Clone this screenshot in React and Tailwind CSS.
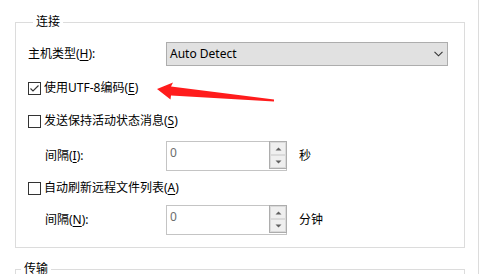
import React from "react";

const U = ({ children }) => <span className="underline underline-offset-[2px] decoration-[1px]">{children}</span>;

function Checkbox({ checked }) {
  return (
    <div className="w-[13px] h-[13px] border border-[#333333] bg-white flex items-center justify-center shrink-0">
      {checked && (
        <svg width="11" height="11" viewBox="0 0 11 11">
          <path d="M1.5 5.5 L4 8 L9.5 2.5" fill="none" stroke="#333333" strokeWidth="1.1" />
        </svg>
      )}
    </div>
  );
}

function Spin({ unit }) {
  return (
    <div className="flex items-start">
      <div className="w-[121px] h-[30px] flex border border-[#c4c4c4] bg-white">
        <div className="flex-1 pl-[3px] pt-[3px] leading-[16px] text-[#6d6d6d]">0</div>
        <div className="w-[18px] h-full flex flex-col border-l border-[#adadad] -my-px -mr-px border-t border-b border-r">
          <div className="flex-1 bg-[#efefef] border border-[#dadada] flex items-center justify-center">
            <svg width="7" height="4" viewBox="0 0 7 4"><path d="M0.5 3.5 L3.5 0.5 L6.5 3.5 Z" fill="#606060" /></svg>
          </div>
          <div className="flex-1 bg-[#efefef] border border-[#dadada] flex items-center justify-center">
            <svg width="7" height="4" viewBox="0 0 7 4"><path d="M0.5 0.5 L3.5 3.5 L6.5 0.5 Z" fill="#606060" /></svg>
          </div>
        </div>
      </div>
      <div className="ml-[12px] leading-[16px] mt-[7px]">{unit}</div>
    </div>
  );
}

export default function App() {
  return (
    <div className="relative w-[481px] h-[274px] overflow-hidden bg-white text-[12px] text-black font-['Noto_Sans','Noto_Sans_CJK_SC',sans-serif]">
      <div className="w-[479px] h-full border-r border-[#dcdcdc] pl-[15px] pt-[14px]">
        <fieldset className="w-[450px] h-[234px] border border-[#dcdcdc] pl-[12px]">
          <legend className="ml-[5px] px-[3px] leading-[16px]">连接</legend>
          <div className="flex flex-col">
            <div className="mt-[12px] h-[24px] flex items-center">
              <div className="w-[138px] leading-[16px]">主机类型(<U>H</U>):</div>
              <div className="w-[282px] h-[24px] bg-[#e1e1e1] border border-[#adadad] flex items-center pl-[3px] pr-[4px]">
                <span className="flex-1 leading-[16px]">Auto Detect</span>
                <svg width="9" height="6" viewBox="0 0 9 6">
                  <path d="M0.5 0.8 L4.5 4.8 L8.5 0.8" fill="none" stroke="#333333" strokeWidth="1.1" />
                </svg>
              </div>
            </div>
            <div className="mt-[14px] h-[16px] flex items-center">
              <Checkbox checked />
              <span className="ml-[3px] leading-[16px]">使用UTF-8编码(<U>E</U>)</span>
            </div>
            <div className="mt-[17px] h-[16px] flex items-center">
              <Checkbox />
              <span className="ml-[3px] leading-[16px]">发送保持活动状态消息(<U>S</U>)</span>
            </div>
            <div className="mt-[12px] h-[30px] flex items-center">
              <div className="w-[138px] pl-[17px] leading-[16px]">间隔(<U>I</U>):</div>
              <Spin unit="秒" />
            </div>
            <div className="mt-[9px] h-[16px] flex items-center">
              <Checkbox />
              <span className="ml-[3px] leading-[16px]">自动刷新远程文件列表(<U>A</U>)</span>
            </div>
            <div className="mt-[9px] h-[30px] flex items-center">
              <div className="w-[138px] pl-[17px] leading-[16px]">间隔(<U>N</U>):</div>
              <Spin unit="分钟" />
            </div>
          </div>
        </fieldset>
        <fieldset className="mt-[13px] w-[450px] h-[60px] border border-[#dcdcdc]">
          <legend className="ml-[5px] px-[3px] leading-[16px]">传输</legend>
        </fieldset>
      </div>
      <svg className="absolute left-0 top-0 pointer-events-none" width="481" height="274" viewBox="0 0 481 274">
        <polygon
          points="157,89 173,82.5 171,86.5 274,99.5 274,101.5 171,95.5 170.5,99.5"
          fill="#ff1c1c"
        />
      </svg>
    </div>
  );
}
